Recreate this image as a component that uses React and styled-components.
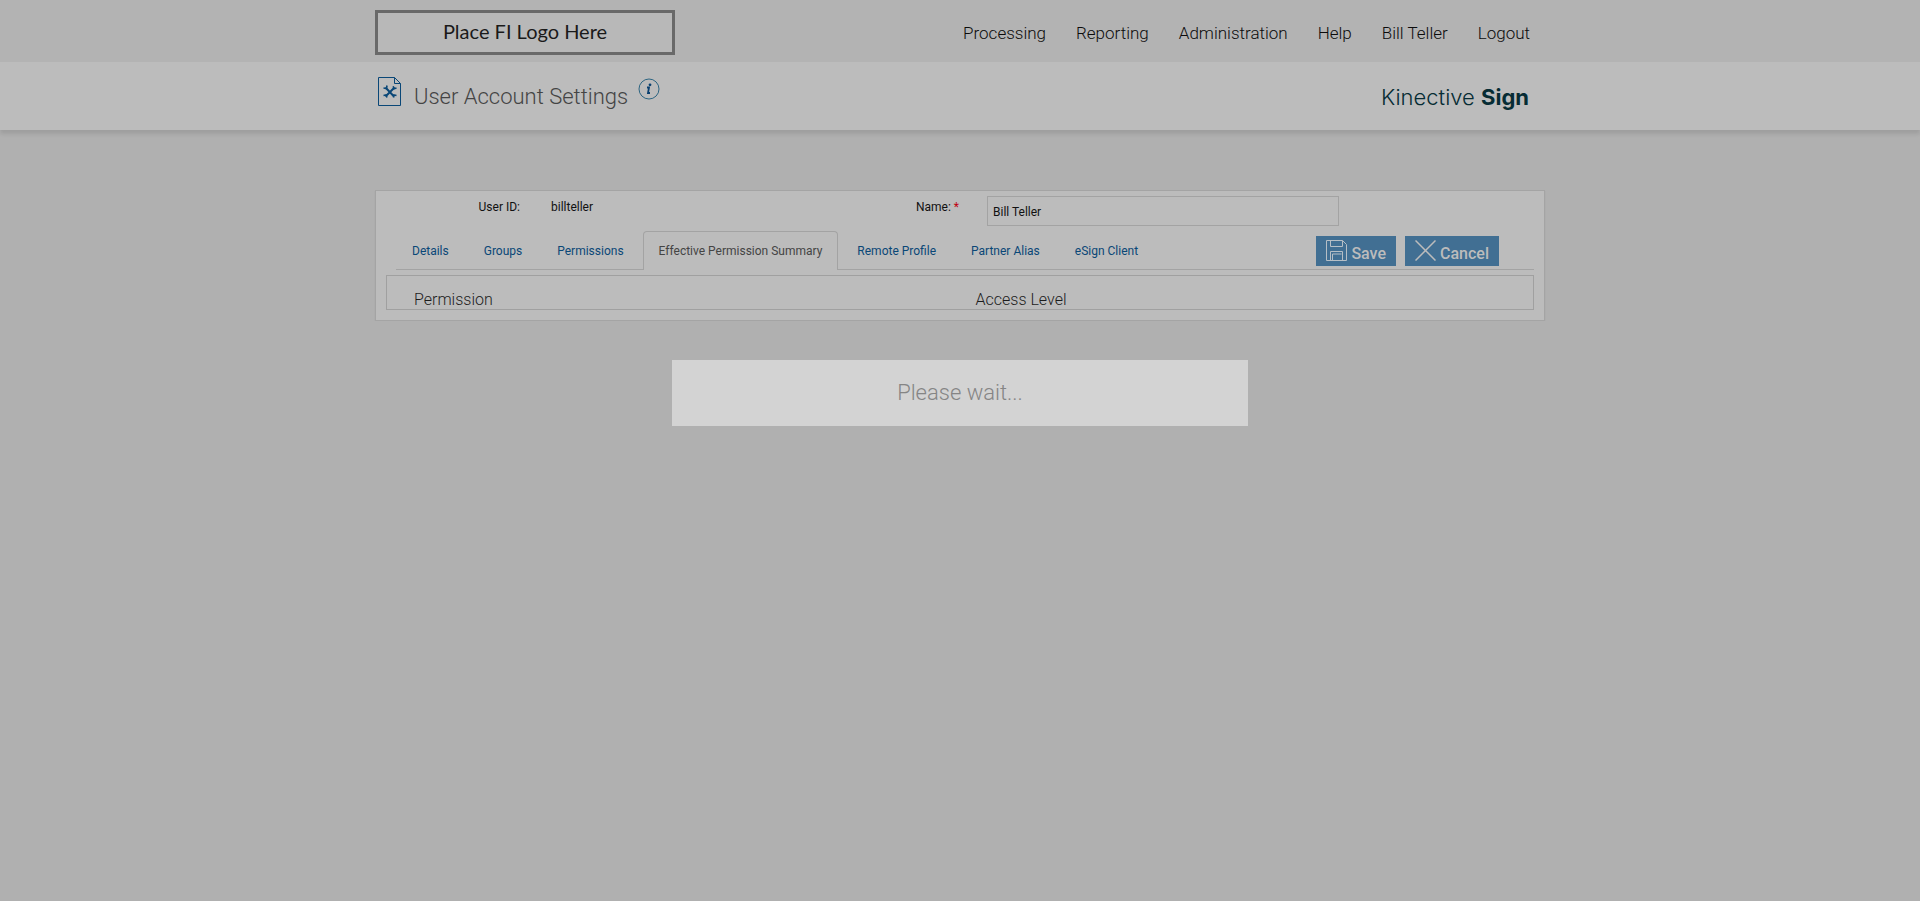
import React, { useState } from "react";
import styled, { createGlobalStyle, css } from "styled-components";

const GlobalStyle = createGlobalStyle`
  *, *::before, *::after { box-sizing: border-box; }
  body {
    margin: 0;
    background: #b0b0b0;
    color: #111;
    font: 400 12px/18px Roboto, "Liberation Sans", sans-serif;
  }
`;

const Container = styled.div`
  width: 100%;
  max-width: 1170px;
  margin: 0 auto;
  display: flex;
  justify-content: space-between;
`;

const TopBar = styled.header`
  background: #b3b3b3;
  padding: 10px 0 7px;
`;

const LogoLink = styled.a`
  width: 300px;
  height: 45px;
  border: 3px solid #696969;
  background: #b8b8b8;
  color: #1a1a1a;
  font: 400 20px/37px Lato, sans-serif;
  text-align: center;
  text-decoration: none;
`;

const Nav = styled.nav`
  display: flex;
  gap: 30px;
  padding: 11px 15px 0 0;
`;

const NavLink = styled.a`
  color: #0c0c0c;
  font-size: 17px;
  font-weight: 300;
  line-height: 24px;
  text-decoration: none;
`;

const TitleBar = styled.div`
  background: #bcbcbc;
  height: 68px;
  box-shadow: 0 4px 4px rgba(0, 0, 0, 0.1);
`;

const TitleGroup = styled.div`
  display: flex;
  align-items: flex-start;
  padding: 15px 0 0 3px;
`;

const Title = styled.h1`
  margin: 5px 10px 0 12px;
  color: #444;
  font-size: 22px;
  font-weight: 300;
  line-height: 30px;
`;

const InfoButton = styled.button`
  margin-top: 1px;
  padding: 0;
  border: 0;
  background: none;
  line-height: 0;
`;

const Brand = styled.div`
  padding: 20px 16px 0 0;
  color: #062c34;
  font: 300 22px/30px Inter, sans-serif;
  strong { font-weight: 700; }
`;

const Card = styled.main`
  width: 100%;
  max-width: 1170px;
  margin: 60px auto 0;
  padding: 5px 0 10px;
  background: #bcbcbc;
  border: 1px solid #a4a4a4;
  box-shadow: 0 1px 1px rgba(0, 0, 0, 0.1);
`;

const Fields = styled.div`
  display: grid;
  grid-template-columns: 147fr 279fr 101fr 352fr 177fr;
  column-gap: 28px;
  line-height: 22px;
`;

const labelStyle = css`
  text-align: right;
  white-space: nowrap;
`;

const FieldName = styled.span`
  ${labelStyle}
  padding-right: 3px;
`;
const FieldLabel = styled.label`${labelStyle}`;

const Required = styled.span`
  color: #c00010;
`;

const TextInput = styled.input`
  width: 100%;
  height: 30px;
  padding: 1px 5px 0;
  border: 1px solid #a3a3a3;
  border-radius: 0;
  background: transparent;
  color: #111;
  font: inherit;
`;

const TabRow = styled.div`
  display: flex;
  justify-content: space-between;
  align-items: flex-end;
  margin: 5px 10px 0 20px;
  padding-right: 35px;
  border-bottom: 1px solid #a3a3a3;
`;

const Tabs = styled.div`
  display: flex;
  gap: 3px;
  margin-bottom: -1px;
`;

const Tab = styled.button`
  height: 39px;
  padding: 0 15px;
  border: 1px solid transparent;
  border-bottom: 0;
  border-radius: 4px 4px 0 0;
  background: transparent;
  color: #0a4777;
  font: inherit;
  white-space: nowrap;
  ${({ $active }) => $active && css`
    border-color: #a3a3a3;
    background: #bcbcbc;
    color: #444;
  `}
`;

const Actions = styled.div`
  display: flex;
  gap: 9px;
  padding-bottom: 3px;
`;

const ActionButton = styled.button`
  display: flex;
  gap: 4px;
  height: 30px;
  padding: 4px 10px 0;
  border: 0;
  background: #416f93;
  color: #bcbcbc;
  font: 500 16px/27px Roboto, sans-serif;
`;

const TableBox = styled.div`
  margin: 5px 10px 0;
  padding-top: 14px;
  border: 1px solid #a0a0a0;
`;

const Table = styled.table`
  width: 100%;
  table-layout: fixed;
  border-collapse: collapse;
  color: #1c1c1c;
`;

const HeadCell = styled.th`
  width: ${({ $width }) => $width};
  padding: 1px 0 0 27px;
  font-size: 16px;
  font-weight: 300;
  line-height: 18px;
  text-align: left;
`;

const Overlay = styled.div`
  position: fixed;
  inset: 0;
  padding-top: 360px;
`;

const WaitBox = styled.div`
  width: 30%;
  margin: 0 auto;
  padding: 18px 0;
  background: #d3d3d3;
  color: #858585;
  font-size: 22px;
  font-weight: 300;
  line-height: 30px;
  text-align: center;
`;

const DocIcon = () => (
  <svg width="24" height="30" viewBox="0 0 24 30" fill="none" stroke="#0a4777">
    <path d="M.5.5h16l6 6v22H.5z" />
    <path d="M16.5.5v6h6" />
    <path d="M7.500 10.500l8.500 9M16.500 10.500l-9 9" strokeWidth="2" />
    <path d="M5.500 11l3 .5.500-3M18.500 11l-2.500.8-.8-2.500M5.500 18.500l2.500-.500 1 2.500M18.500 18.500l-2.500-.5-.5 2.500" strokeWidth="1.600" />
  </svg>
);

const InfoIcon = () => (
  <svg width="22" height="22" viewBox="0 0 22 22" fill="none">
    <circle cx="11" cy="11" r="10" stroke="#2d6582" />
    <circle cx="12" cy="6.800" r="1.400" fill="#0a4070" />
    <path d="M9 9.500h2l-1 5.500h2" stroke="#0a4070" strokeWidth="1.800" />
  </svg>
);

const SaveIcon = () => (
  <svg width="21" height="21" viewBox="0 0 21 21" fill="none" stroke="#b6bfc6">
    <path d="M.5.500h16l4 4v16H.5z" />
    <path d="M4.500.5v6h12v-6M4.500 20.500v-9h12v9M6.500 20v-6h9" />
  </svg>
);

const CancelIcon = () => (
  <svg width="21" height="21" viewBox="0 0 21 21" stroke="#bcbcbc" strokeWidth="1.500">
    <path d="M.5.500l20 20M20.500.5l-20 20" />
  </svg>
);

const navItems = ["Processing", "Reporting", "Administration", "Help", "Bill Teller", "Logout"];
const tabs = ["Details", "Groups", "Permissions", "Effective Permission Summary", "Remote Profile", "Partner Alias", "eSign Client"];

export default function App() {
  const [name, setName] = useState("Bill Teller");
  return (
    <>
      <GlobalStyle />
      <TopBar>
        <Container>
          <LogoLink href="#">Place FI Logo Here</LogoLink>
          <Nav>
            {navItems.map((item) => <NavLink key={item} href="#">{item}</NavLink>)}
          </Nav>
        </Container>
      </TopBar>
      <TitleBar>
        <Container>
          <TitleGroup>
            <DocIcon />
            <Title>User Account Settings</Title>
            <InfoButton type="button" aria-label="Information"><InfoIcon /></InfoButton>
          </TitleGroup>
          <Brand>Kinective <strong>Sign</strong></Brand>
        </Container>
      </TitleBar>
      <Card>
        <Fields>
          <FieldName>User ID:</FieldName>
          <span>billteller</span>
          <FieldLabel htmlFor="name">Name: <Required>*</Required></FieldLabel>
          <TextInput id="name" value={name} onChange={(e) => setName(e.target.value)} />
        </Fields>
        <TabRow>
          <Tabs role="tablist">
            {tabs.map((tab, i) => (
              <Tab key={tab} type="button" role="tab" aria-selected={i === 3} $active={i === 3}>{tab}</Tab>
            ))}
          </Tabs>
          <Actions>
            <ActionButton type="button"><SaveIcon />Save</ActionButton>
            <ActionButton type="button"><CancelIcon />Cancel</ActionButton>
          </Actions>
        </TabRow>
        <TableBox>
          <Table>
            <thead>
              <tr>
                <HeadCell $width="49%">Permission</HeadCell>
                <HeadCell $width="51%">Access Level</HeadCell>
              </tr>
            </thead>
          </Table>
        </TableBox>
      </Card>
      <Overlay>
        <WaitBox role="status">Please wait...</WaitBox>
      </Overlay>
    </>
  );
}
